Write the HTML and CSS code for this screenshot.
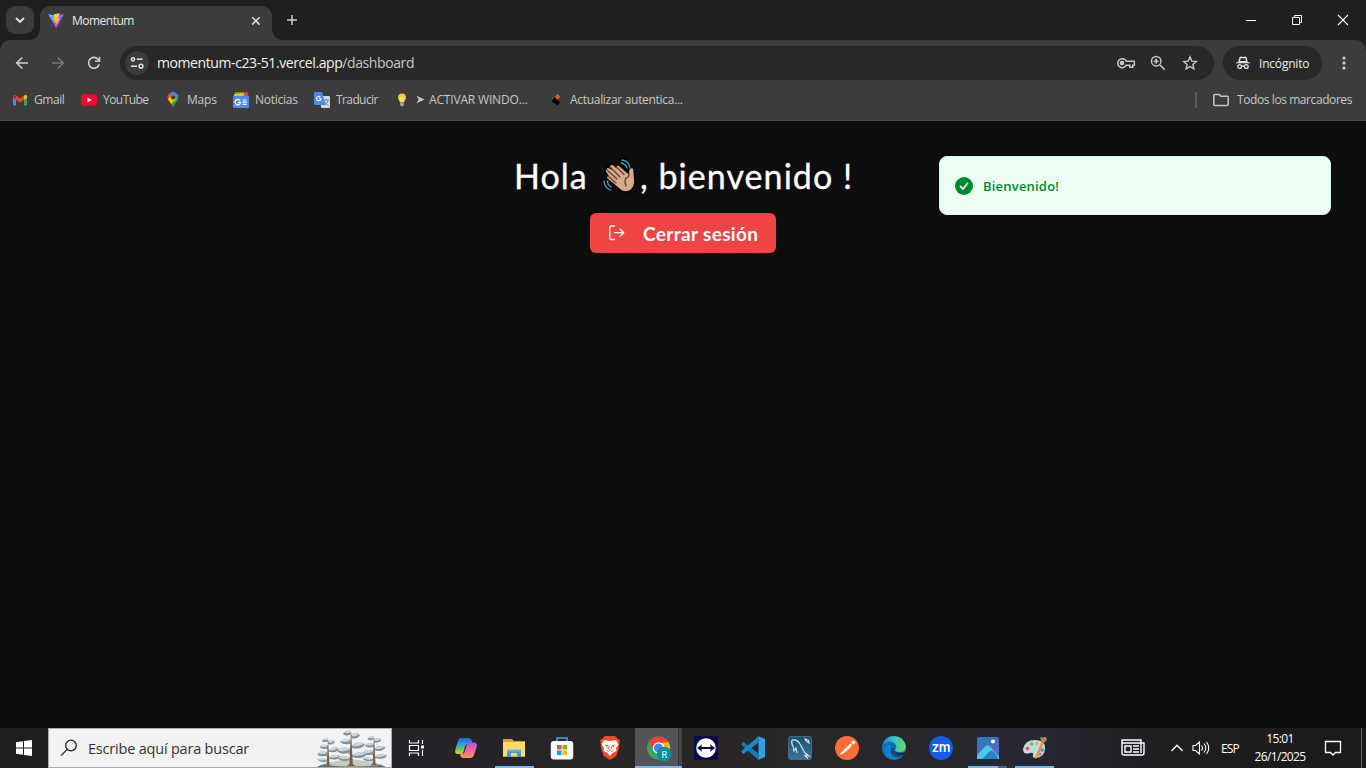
FILE: index.html
```html
<!DOCTYPE html>
<html lang="es">
<head>
<meta charset="utf-8">
<title>Momentum</title>
<link rel="stylesheet" href="styles.css">
</head>
<body>
<div class="screen">
  <header class="tabstrip">
    <div class="tab-search"><svg width="28" height="28" viewBox="0 0 28 28"><path d="M10 12l4 4 4-4" fill="none" stroke="#e6e6e6" stroke-width="1.800"/></svg></div>
    <div class="tab">
      <svg class="favicon" width="16" height="16" viewBox="0 0 16 16"><defs><linearGradient id="va" x2="1" y2="1"><stop stop-color="#41d1ff"/><stop offset=".7" stop-color="#bd34fe"/></linearGradient><linearGradient id="vb" x2="0" y2="1"><stop stop-color="#ffd943"/><stop offset="1" stop-color="#ffa800"/></linearGradient></defs><path d="M.2 1.2L8 2.5l7.8-1.3L8.2 15.4z" fill="url(#va)"/><path d="M11.8.2L6 1.2l-.6 6.400 1.800-.3-.5 2.600 1.300-.4-.5 3.800 4.400-7.800-2 .3z" fill="url(#vb)"/></svg>
      <span class="tab-title">Momentum</span>
      <svg class="tab-close" width="10" height="10" viewBox="0 0 10 10"><path d="M1.2 1.2l7.4 7.4M8.6 1.2L1.2 8.6" stroke="#e3e3e3" stroke-width="1.5"/></svg>
    </div>
    <svg class="tab-new" width="12" height="12" viewBox="0 0 12 12"><path d="M6 1v10M1 6h10" stroke="#d0d0d0" stroke-width="1.5"/></svg>
    <div class="window-buttons">
      <svg width="46" height="40" viewBox="0 0 46 40"><path d="M18 20.5h10" stroke="#fff"/></svg>
      <svg width="46" height="40" viewBox="0 0 46 40"><path d="M18.5 17.5h7v7h-7zM20.500 17.500v-2h7v7h-2" fill="none" stroke="#fff"/></svg>
      <svg width="46" height="40" viewBox="0 0 46 40"><path d="M18 15l10 10M28 15L18 25" stroke="#fff" stroke-width="1.1"/></svg>
    </div>
  </header>
  <nav class="toolbar">
    <div class="address-row">
      <svg class="nav-icon" width="16" height="16" viewBox="0 0 16 16"><path d="M14 8H3M8.300 2.500L2.700 8l5.600 5.500" fill="none" stroke="#d0d0d0" stroke-width="1.600"/></svg>
      <svg class="nav-icon" width="16" height="16" viewBox="0 0 16 16"><path d="M2 8h11M7.700 2.500L13.300 8l-5.600 5.500" fill="none" stroke="#777" stroke-width="1.600"/></svg>
      <svg class="nav-icon" width="16" height="16" viewBox="0 0 16 16"><path d="M13.200 9.200A5.400 5.400 0 1 1 12 4.200L13.700 6M13.500 2v4.300H9" fill="none" stroke="#d0d0d0" stroke-width="1.600"/></svg>
      <div class="omnibox">
        <svg class="site-info" width="24" height="24" viewBox="0 0 24 24"><circle cx="12" cy="12" r="12" fill="#3c3c3c"/><g fill="none" stroke="#e3e3e3" stroke-width="1.500"><circle cx="8" cy="8.300" r="1.600"/><path d="M11.800 8.300H17.500M6 15.200h6"/><circle cx="16" cy="15.200" r="1.900"/></g></svg>
        <span class="url"><b>momentum-c23-51.vercel.app</b>/dashboard</span>
        <svg class="key" width="20" height="20" viewBox="0 0 20 20"><g fill="none" stroke="#c7c7c7" stroke-width="1.500"><path d="M10.300 8.200h8v4h-1.500v2h-3v-2h-3.500A4.500 4.500 0 1 1 10.300 8.200z"/><circle cx="6" cy="10" r="1.600" fill="#c7c7c7"/></g></svg>
        <svg class="zoom" width="16" height="16" viewBox="0 0 16 16"><path d="M10 10l4.700 4.700M6.200 3.700v5M3.700 6.200h5" fill="none" stroke="#c7c7c7" stroke-width="1.600"/><circle cx="6.200" cy="6.200" r="4.700" fill="none" stroke="#c7c7c7" stroke-width="1.500"/></svg>
        <svg class="star" width="16" height="16" viewBox="0 0 16 16"><path d="M8 1.900l1.800 4.200 4.500.4-3.400 3 1 4.400L8 11.600l-3.900 2.300 1-4.400-3.400-3 4.500-.4z" fill="none" stroke="#c7c7c7" stroke-width="1.400"/></svg>
      </div>
      <div class="incognito"><svg width="16" height="16" viewBox="0 0 16 16"><path d="M1 7.800h14M3.700 7.300l1.200-5 1.700-.3L8 2.700 9.500 2l1.600.3 1.200 5z" fill="#e3e3e3" stroke="#e3e3e3"/><path d="M5.700 3.200h4.600L11 6H5z" fill="#282828"/><g fill="none" stroke="#e3e3e3" stroke-width="1.300"><circle cx="4.700" cy="11.500" r="1.900"/><circle cx="11.300" cy="11.500" r="1.900"/><path d="M6.500 11h3"/></g></svg><span>Incógnito</span></div>
      <svg class="more" width="4" height="16" viewBox="0 0 4 16"><g fill="#d0d0d0"><circle cx="2" cy="3" r="1.600"/><circle cx="2" cy="8" r="1.600"/><circle cx="2" cy="13" r="1.600"/></g></svg>
    </div>
    <div class="bookmarks">
      <div class="bm bm-gmail"><svg width="16" height="16" viewBox="0 0 16 16"><path d="M1 4l3 2v7.500H1z" fill="#4285f4"/><path d="M15 4l-3 2v7.500h3z" fill="#34a853"/><path d="M1 4.500Q1 1.500 4 3.500l4 3 4-3v4L8 10.500l-4-3-3-2z" fill="#ea4335"/><path d="M12 3.500q3-2 3 1v1.300l-3 2z" fill="#fbbc04"/><path d="M1 4.500Q1 3 2.500 3L4 4v3.500L1 5.500z" fill="#c5221f"/></svg><span>Gmail</span></div>
      <div class="bm bm-youtube"><svg width="16" height="16" viewBox="0 0 16 16"><rect y="2.300" width="16" height="11.400" rx="3" fill="#ff0033"/><path d="M6.300 5.500L10.700 8l-4.400 2.500z" fill="#fff"/></svg><span>YouTube</span></div>
      <div class="bm bm-maps"><svg width="16" height="16" viewBox="0 0 16 16"><defs><clipPath id="pin"><path d="M8 .2c-3.200 0-5.400 2.300-5.400 5.200 0 3.300 4 5.200 5.400 10.400 1.400-5.200 5.400-7.100 5.400-10.400C13.400 2.500 11.200.2 8 .2z"/></clipPath></defs><g clip-path="url(#pin)"><path d="M0 0h16v16H0z" fill="#34a853"/><path d="M4 0h10v4L8 7z" fill="#4285f4"/><path d="M0 0h5l3 5-5 4H0z" fill="#ea4335"/><path d="M2 8l5-5 4 4-6 6z" fill="#fbbc04"/></g><circle cx="8" cy="5.400" r="2" fill="#343434"/></svg><span>Maps</span></div>
      <div class="bm bm-news"><svg width="16" height="16" viewBox="0 0 16 16"><path d="M2 0h9l3 2v5H2z" fill="#34a853"/><path d="M8 1l7-.7.5 6H8z" fill="#ea4335"/><path d="M1 2l10-1v5H1z" fill="#fbbc04"/><rect y="4" width="16" height="12" rx="1" fill="#4c8bf5"/><path d="M7 8.500A2.700 2.700 0 1 0 7.500 10.300H5M9.500 8h4M9.500 10.200h4.500M9.500 12.400h4" fill="none" stroke="#fff" stroke-width="1.200"/></svg><span>Noticias</span></div>
      <div class="bm bm-translate"><svg width="16" height="16" viewBox="0 0 16 16"><rect x="7" y="4" width="9" height="12" rx="1" fill="#d2d9e0"/><path d="M9 8h6M12 7v1.500M14 8.500c-.8 3-2.500 4-3.500 4.800M10.500 9.500l3.500 4" stroke="#6d8292" fill="none"/><path d="M1 0h7l3.500 13H1a1 1 0 0 1-1-1V1a1 1 0 0 1 1-1z" fill="#4a88ee"/><path d="M6.300 5A2.200 2.200 0 1 0 7 6.700H5" stroke="#fff" fill="none" stroke-width="1.100"/></svg><span>Traducir</span></div>
      <div class="bm bm-bulb"><svg width="16" height="16" viewBox="0 0 16 16"><path d="M8 1.500a4 4 0 0 0-4 4c0 2 1.500 3 2 5h4c.5-2 2-3 2-5a4 4 0 0 0-4-4z" fill="#f5c83d"/><path d="M7 10V6l1-.8L9 6v4" fill="none" stroke="#fff0a0"/><path d="M6.200 10.500h3.600v3L8 14.500l-1.800-1z" fill="#9aa6ac"/></svg><span><i class="arrow"><svg width="9" height="9" viewBox="0 0 9 9"><path d="M.5.800L8.700 4.500.5 8.200 2.700 4.500z" fill="#c7c7c7"/></svg></i>ACTIVAR WINDO...</span></div>
      <div class="bm bm-auth"><svg width="16" height="16" viewBox="0 0 16 16"><path d="M9.500 2l2.700 2.700-2.700 2.700-2.700-2.700z" fill="#f25533"/><path d="M6.300 5l2.600 2.600 3.200 3-2.700 3-2.500-2.500-.6.500L3.600 9 6 6.500z" fill="#050505"/></svg><span>Actualizar autentica...</span></div>
      <div class="all-bookmarks"><svg width="16" height="16" viewBox="0 0 16 16"><path d="M.8 3.500q0-1 1-1h4.300L8 4.300h6.200q1 0 1 1v7.200q0 1-1 1H1.800q-1 0-1-1z" fill="none" stroke="#c7c7c7" stroke-width="1.500"/></svg><span>Todos los marcadores</span></div>
    </div>
  </nav>
  <main class="page">
    <section class="welcome">
      <h1><span class="hello">Hola</span><svg class="wave" width="36" height="36" viewBox="0 0 36 36"><g fill="none" stroke="#000" stroke-width="4" stroke-linecap="round"><path d="M21 2q7 1 8 8M20 5q5 1 6 5M3 23q0 7 7 9M6.500 23q0 4 4 6"/></g><path d="M5 11Q6 8 9 10L8 8q2-3 5-1l2 2q1-4 4-1l8 7 1-4q3-3 5 0l1 13q-1 9-9 10-5 0-8-4L6 21q-2-3 1-3l-2-3q-2-3 0-4z" fill="#d7a98a" stroke="#000" stroke-width="1.500"/><path d="M6 12l10 9M9 9l10 10M15 8.500l8 8M7 18l8 7M28 15.500q0 4-3 4.500-2 4 0 8" fill="none" stroke="#60432f" stroke-width="1.300" stroke-linecap="round"/><path d="M21 2q7 1 8 8M20 5q5 1 6 5M3 23q0 7 7 9M6.500 23q0 4 4 6" fill="none" stroke="#39a9ce" stroke-width="1.300" stroke-linecap="round"/></svg><span class="greeting">, bienvenido !</span></h1>
      <button class="logout"><svg width="18" height="18" viewBox="0 0 18 18"><path d="M6.500 2H2.800Q1.800 2 1.800 3v11.500q0 1 1 1h3.700M6.500 8.700H15.500M12 5L15.700 8.700 12 12.400" fill="none" stroke="#fff" stroke-width="1.300" stroke-linecap="round" stroke-linejoin="round"/></svg><span>Cerrar sesión</span></button>
    </section>
    <div class="toast"><svg width="18" height="18" viewBox="0 0 18 18"><circle cx="9" cy="9" r="9" fill="#008a2e"/><path d="M5.500 9.400l2.500 2.700L12.500 6.300" fill="none" stroke="#ecfdf3" stroke-width="1.700" stroke-linecap="round" stroke-linejoin="round"/></svg><span>Bienvenido!</span></div>
  </main>
  <footer class="taskbar">
    <div class="start"><svg width="16" height="16" viewBox="0 0 16 16"><path d="M0 2.300l7-1v6.200H0zM8 1.100L16 0v7.500H8zM0 8.500h7v6.300l-7-1zM8 8.500h8V16l-8-1.100z" fill="#fff"/></svg></div>
    <div class="search"><svg width="18" height="18" viewBox="0 0 18 18"><circle cx="11" cy="6.500" r="5.300" fill="none" stroke="#222" stroke-width="1.300"/><path d="M7.200 10.400L1 16.600" stroke="#222" stroke-width="1.300"/></svg><span>Escribe aquí para buscar</span>
      <svg class="trees" width="74" height="38" viewBox="0 0 74 38"><defs><g id="tree"><path d="M-1.600 35L0 1l1.800 34 3 2h-9z" fill="#7a5c45"/><path d="M0 28l8-3M0 25l-8-4M0 18l7-3M0 15l-6-4" stroke="#7a5c45" fill="none"/><g fill="#7d909c"><path d="M0 2q-6-1-8 3 4 3 8 0zM0 6q5-4 9 0-3 5-9 3zM0 11q-7-3-11 2 5 4 11 1zM1 17q5-6 13-2-3 6-13 4zM-1 20q-8-4-13 2 5 5 13 1zM1 26q7-5 15-1-4 6-15 3zM-1 29q-7-4-13 0 5 5 13 2z"/></g><g fill="#ccd8e0"><path d="M0 1.500q-5-1-7 2.300 4 1.200 7-.5zM1 5.500q4-3 7 0-3 2.500-7 1.500zM-1 10.500q-6-2-9 1.800 5 1.500 9-.5zM2 16.500q5-5 11-2-4 3-11 3zM-2 19.500q-7-3-11 1.800 5 2 11-.5zM2 25.500q7-4 13-1-5 3-13 2zM-2 28.500q-6-3-11 0 5 2.500 11 1z"/></g></g></defs><path d="M3 38Q14 32 37 32t35 6z" fill="#5b6f87"/><path d="M10 36q24-11 56 0-26 3-56 0z" fill="#c9cbb6"/><use href="#tree" transform="translate(14 8) scale(.78)"/><use href="#tree" transform="translate(60 6) scale(.82)"/><use href="#tree" transform="translate(37 0)"/></svg>
    </div>
    <div class="apps">
      <div class="app task-view"><svg width="18" height="18" viewBox="0 0 18 18"><path d="M1.500 1v3h9V1M1.500 17v-3h9v3M1.500 6.500h9v5h-9zM14.500 1v4M14.500 11v6" fill="none" stroke="#fff" stroke-width="1.200"/><path d="M13 6.500h3v3h-3z" fill="#fff"/></svg></div>
      <div class="app"><svg width="24" height="24" viewBox="0 0 24 24"><defs><linearGradient id="ca" x2="0" y2="1"><stop stop-color="#1765d8"/><stop offset=".4" stop-color="#2ba2dd"/><stop offset=".7" stop-color="#5dc65b"/><stop offset="1" stop-color="#efd225"/></linearGradient><linearGradient id="cb" x2="0" y2="1"><stop stop-color="#a653e7"/><stop offset=".5" stop-color="#ed67a2"/><stop offset="1" stop-color="#ff9951"/></linearGradient></defs><path d="M7 2h8q2 0 3 3l.7 2.500h-4Q12 7.500 11 11l-1.500 5Q9 18 6 18H4q-4 0-2.500-5L4 5q1-3 3-3z" fill="url(#ca)"/><path d="M17 22H9q-2 0-2.500-2L6 18q3 0 4-4l1.500-5q.7-2.500 3-2.500h5.500q4 0 2.500 5L20 19q-1 3-3 3z" fill="url(#cb)"/><path d="M14 8q-1 0-1.600 2L10.500 16q-.5 1.500-1.500 1.700L11 11q.7-3 3-3z" fill="#292435"/></svg></div>
      <div class="app open"><svg width="24" height="24" viewBox="0 0 24 24"><path d="M1 3h9l2 2h11v16H1z" fill="#dba024"/><path d="M1 6h22v14H1z" fill="#ffd86e"/><path d="M5 21v-7h14v7h-4v-4H9v4z" fill="#3e9ad6"/><path d="M5 13.500h14v2H5z" fill="#63b6e4"/></svg></div>
      <div class="app"><svg width="24" height="24" viewBox="0 0 24 24"><path d="M7 5V2h10v3" fill="none" stroke="#39a8e0" stroke-width="1.700"/><rect x=".8" y="5" width="22.400" height="18.500" rx="3" fill="#f8fafb"/><path d="M7 9h4.500v4.500H7z" fill="#f05025"/><path d="M12.500 9H17v4.500h-4.500z" fill="#7fba00"/><path d="M7 14.500h4.500V19H7z" fill="#00a4ef"/><path d="M12.500 14.500H17V19h-4.500z" fill="#ffb900"/></svg></div>
      <div class="app"><svg width="24" height="24" viewBox="0 0 24 24"><path d="M7 0h10l3 3 2 1-1 5 .3 2-3 9L12 24l-6.300-4-3-9L3 9 2 4l2-1z" fill="#f04b24"/><path d="M6 4l6 1 6-1 2.500 4.500L18 12l.5 3-4 2-2.500 3-2.500-3-4-2 .5-3-2.500-3.500z" fill="#fff"/><path d="M7 8.500l3.500 1L8.500 11zM17 8.500l-3.500 1 2 1.500zM10.500 13.500h3L12 15z" fill="#f04b24"/><path d="M11 10l-.7 3M13 10l.7 3M8.500 14l2.500 2M15.500 14L13 16" stroke="#f04b24" stroke-width=".8"/></svg></div>
      <div class="app active"><svg width="26" height="26" viewBox="0 0 26 26"><circle cx="12.500" cy="12" r="11.500" fill="#34a853"/><path d="M2.500 6.200A11.500 11.500 0 0 1 22.500 6.200L12.500 9z" fill="#ea4335"/><path d="M22.500 6.200A11.500 11.500 0 0 1 12.500 23.500L16.500 13l-4-6z" fill="#fbbc05"/><path d="M2.500 6.200L8 15l4.500-9z" fill="#ea4335"/><circle cx="12.500" cy="12" r="5.800" fill="#fff"/><circle cx="12.500" cy="12" r="4.500" fill="#4285f4"/><circle cx="18.300" cy="18.300" r="7.500" fill="#078fa0"/><text class="avatar" x="18.300" y="21.500">R</text></svg></div>
      <div class="app"><svg width="24" height="24" viewBox="0 0 24 24"><rect width="24" height="24" rx="2" fill="#080b50"/><circle cx="12" cy="12" r="9.800" fill="#fff"/><path d="M3 12l5-3.700-.6 2.700h9.200L16 8.300l5 3.700-5 3.700.6-2.700H7.400l.6 2.700z" fill="#080b50"/></svg></div>
      <div class="app narrow code"><svg width="24" height="24" viewBox="0 0 24 24"><path d="M0 8.500L2.500 6l15 11.500V24L0 8.500z" fill="#137abd"/><path d="M0 15.500L2.500 18l15-11.500V.3z" fill="#1b87ce"/><path d="M17.500.3L24 3v18l-6.500 2.700z" fill="#2ca1e6"/></svg></div>
      <div class="app narrow"><svg width="24" height="24" viewBox="0 0 24 24"><defs><linearGradient id="sql" x2="0" y2="1"><stop stop-color="#1c4e6a"/><stop offset="1" stop-color="#3b75a0"/></linearGradient></defs><rect x=".5" y=".5" width="23" height="23" rx="2" fill="url(#sql)" stroke="#416c86"/><path d="M4 4q5-1 8 4 3 6 5 9l4 3-4-.5 3 3M4 4q-1 4 1 6l1 5 2-3 1 5M17 3l1.500 2.500L21 7l-.5-2.500z" fill="none" stroke="#d9e8ee" stroke-width="1.100"/></svg></div>
      <div class="app narrow"><svg width="24" height="24" viewBox="0 0 24 24"><circle cx="12" cy="12" r="12" fill="#ff6c37"/><path d="M5 19l1-2.500 8-7.500 2 2-7 6zM14 8q2-1 3 1l-1 1.500-2-1.500zM16 6q1-2.500 3.500-1 1.500 2-1 3.500z" fill="#fff"/></svg></div>
      <div class="app narrow"><svg width="24" height="24" viewBox="0 0 24 24"><defs><linearGradient id="ea"><stop stop-color="#168bd4"/><stop offset=".5" stop-color="#34c7bd"/><stop offset="1" stop-color="#69d75b"/></linearGradient></defs><circle cx="12" cy="12" r="12" fill="#126bbb"/><path d="M.5 9Q3 0 12 0t12 10q0 6-6 6-5 0-5-2 2-2 1-5-5-7-13.500 0z" fill="url(#ea)"/><path d="M9 9q-3 10 8 12.500-6 4-12-.500Q1 15 3 11q2-3 6-2z" fill="#1680c8"/><path d="M12 12q-1 6 10 5-4 5-8 4-7-2-5-8 1-2 3-1z" fill="#164b7d"/><path d="M13 14q0 4 9.500 2.500L24 14v4l-2 1q-8 2-9-5z" fill="#292931"/></svg></div>
      <div class="app narrow"><svg width="24" height="24" viewBox="0 0 24 24"><circle cx="12" cy="12" r="12" fill="#125ce8"/><text class="zm" x="12" y="15.800">zm</text></svg></div>
      <div class="app narrow open split"><svg width="24" height="24" viewBox="0 0 24 24"><defs><linearGradient id="ph" x2="1" y2="1"><stop stop-color="#207dbd"/><stop offset="1" stop-color="#765bc0"/></linearGradient></defs><rect x="1" y="1" width="22" height="22" rx="2" fill="url(#ph)"/><path d="M1 19L10 9.500q2-1 4 1l9 10V23H1z" fill="#47c9ee"/><path d="M6 23l8-8q2-1 4 1l4 5-1 2z" fill="#2685c7"/><circle cx="17" cy="5.500" r="2" fill="#fff"/></svg></div>
      <div class="app narrow open"><svg width="24" height="24" viewBox="0 0 24 24"><path d="M0 13Q2 4 12 4q10 0 10 8 0 9-9 10-4 0-3-3 1-3-3-2-7 2-7-4z" fill="#bddbe8"/><circle cx="4.500" cy="12.500" r="1.800" fill="#df5050"/><circle cx="8.500" cy="8" r="1.800" fill="#75b84a"/><circle cx="14" cy="7.500" r="1.800" fill="#e4bf3f"/><circle cx="19" cy="14" r="1.800" fill="#4c91c5"/><circle cx="17" cy="18" r="1.600" fill="#9373bb"/><path d="M18.500 6l2 1-5.500 14-2.500 2q-1-1 0-3z" fill="#e29a32"/><path d="M17 1.500L23 1l1 3-3 3-2.500-1z" fill="#b28261"/></svg></div>
    </div>
    <div class="tray">
      <svg class="news" width="24" height="18" viewBox="0 0 24 18"><path d="M1 1h19v3h3v10q0 2-2 2H3q-2 0-2-2zM20 4v10M1 4h19M4 7h6v6H4zM12 7h6M12 10h6M12 13h6" fill="none" stroke="#fff" stroke-width="1.400"/></svg>
      <svg class="chevron" width="12" height="8" viewBox="0 0 12 8"><path d="M.5 7L6 1.300 11.500 7" fill="none" stroke="#fff" stroke-width="1.300"/></svg>
      <svg class="volume" width="18" height="16" viewBox="0 0 18 16"><path d="M1 5.500h2.500L7.500 2v12L3.500 10.500H1zM9.500 5.500q2 2.500 0 5M12 3.500q3.500 4.500 0 9M14.500 2q4.500 6 0 12" fill="none" stroke="#fff" stroke-width="1.100"/></svg>
      <span class="lang">ESP</span>
      <div class="clock"><span class="time">15:01</span><span class="date">26/1/2025</span></div>
      <svg class="notice" width="18" height="18" viewBox="0 0 18 18"><path d="M1.500 2.500h15v11h-5L9 16l-2.500-2.500h-5z" fill="none" stroke="#fff" stroke-width="1.300"/></svg>
    </div>
  </footer>
</div>
</body>
</html>
```

FILE: styles.css
```css
* { box-sizing: border-box; }
body { margin: 0; background: #0d0d0d; }
svg { display: block; flex: none; }
span { white-space: nowrap; }
.screen { width: 1366px; height: 768px; display: flex; flex-direction: column; overflow: hidden; font-family: "Open Sans", "Noto Sans", sans-serif; background: #1f1f1f; }

.tabstrip { height: 40px; display: flex; align-items: center; padding-left: 6px; background: #1f1f1f; }
.tab-search { width: 28px; height: 28px; border-radius: 9px; background: #3c3c3c; }
.tab { position: relative; width: 232px; height: 34px; margin: 6px 0 0 6px; padding: 0 11px 5px 8px; display: flex; align-items: center; border-radius: 10px 10px 0 0; background: #3c3c3c; }
.tab::before, .tab::after { content: ""; position: absolute; bottom: 0; width: 10px; height: 10px; }
.tab::before { left: -10px; background: radial-gradient(circle at 0 0, transparent 9.5px, #3c3c3c 10px); }
.tab::after { right: -10px; background: radial-gradient(circle at 100% 0, transparent 9.5px, #3c3c3c 10px); }
.tab-title { margin-left: 8px; font-size: 12px; color: #e8e8e8; letter-spacing: -.5px; }
.tab-close { margin-left: auto; }
.tab-new { margin-left: 14px; }
.window-buttons { margin-left: auto; display: flex; }

.toolbar { height: 81px; background: #3c3c3c; border-radius: 10px 10px 0 0; border-bottom: 1px solid #4c4c4c; }
.address-row { height: 46px; display: flex; align-items: center; padding-left: 14px; }
.nav-icon { margin-right: 20px; }
.omnibox { width: 1094px; height: 34px; margin-left: -2px; padding: 0 16px 0 5px; display: flex; align-items: center; border-radius: 17px; background: #282828; }
.url { margin: 0 0 1px 8px; color: #c7c7c7; font-size: 14px; letter-spacing: -.41px; }
.url b { font-weight: 400; color: #f1f1f1; }
.key { margin-left: auto; }
.zoom { margin-left: 14px; }
.star { margin-left: 16px; }
.incognito { width: 99px; height: 34px; margin-left: 9px; padding-left: 12px; display: flex; align-items: center; gap: 8px; border-radius: 17px; background: #282828; color: #eee; font-size: 12px; letter-spacing: -.2px; }
.more { margin-left: 20px; }
.bookmarks { height: 28px; display: flex; align-items: center; padding-left: 12px; color: #c7c7c7; font-size: 12px; letter-spacing: -.45px; }
.bm { display: flex; align-items: center; gap: 6px; flex: none; }
.bm span { display: flex; align-items: center; }
.bookmarks span { margin-bottom: 1px; }
.bm-gmail { width: 69px; }
.bm-youtube { width: 84px; letter-spacing: -.55px; }
.bm-maps { width: 68px; letter-spacing: -.2px; }
.bm-news { width: 81px; letter-spacing: -.25px; }
.bm-translate { width: 80px; letter-spacing: -.6px; }
.bm-bulb { width: 154px; letter-spacing: -.17px; }
.bm-auth { letter-spacing: -.3px; }
.arrow { margin-right: 4px; }
.all-bookmarks { margin-left: auto; height: 16px; padding: 0 14px 0 16px; display: flex; align-items: center; gap: 8px; border-left: 2px solid #5a5a5a; letter-spacing: -.42px; }

.page { height: 607px; background: #0d0d0d; display: grid; grid-template-columns: 1fr; }
.page > * { grid-area: 1 / 1; }
.welcome { display: flex; flex-direction: column; align-items: center; padding-top: 34px; font-family: Lato, sans-serif; }
h1 { margin: 0; height: 40px; display: flex; align-items: center; color: #fff; font-size: 34px; font-weight: 400; width: 338px; letter-spacing: 1px; -webkit-text-stroke: .3px #fff; }
h1 span { flex: none; }
.hello { width: 87px; }
.wave { margin: 2px 3px 0 0; }
.greeting { letter-spacing: 1.05px; }
.logout { width: 186px; height: 40px; margin-top: 18px; padding: 0 0 0 18px; display: flex; align-items: center; gap: 17px; border: 0; border-radius: 6px; background: #ef4444; color: #fff; font: 700 19px Lato, sans-serif; letter-spacing: .35px; }
.toast { width: 392px; height: 59px; justify-self: end; margin: 35px 35px 0 0; padding-left: 15px; display: flex; align-items: center; gap: 10px; border: 1px solid #d3fde5; border-radius: 8px; background: #ecfdf3; color: #008a2e; font-size: 13px; font-weight: 600; letter-spacing: .2px; }

.taskbar { height: 40px; display: flex; background: linear-gradient(90deg, #1d1d1e, #242329 32%, #292624 50%, #292627 57%, #27272b 65%, #272731 76%, #1e1e20 86%, #1b1b1b); }
.start { width: 48px; padding: 12px 0 0 16px; }
.search { width: 344px; display: flex; align-items: center; padding-left: 11px; border: 1px solid #aaa; background: #f2f2f2; color: #333; font-size: 14.5px; letter-spacing: -.2px; }
.search span { margin-left: 10px; }
.trees { margin: 0 3px 0 auto; }
.apps { display: flex; }
.app { width: 48px; display: grid; place-items: center; border-bottom: 3px solid transparent; padding-top: 3px; background-clip: padding-box; }
.app.task-view { width: 50px; padding-right: 1px; }
.app.narrow { width: 47px; }
.app.narrow.code { width: 46px; }
.app.open { background: linear-gradient(#76b9ed, #76b9ed) center bottom / 39px 2px no-repeat border-box; }
.app.open.split { background-image: linear-gradient(90deg, #76b9ed 76%, #44617b 76%); }
.app.active { width: 47px; margin-left: 1px; background: linear-gradient(90deg, #545457 92%, #333 92%, #333 94%, #454548 94%); border-bottom: 2px solid #76b9ed; }
.avatar { font: 9px Roboto, sans-serif; fill: #fff; text-anchor: middle; }
.zm { font: 600 13px Inter, sans-serif; fill: #fff; text-anchor: middle; letter-spacing: -.3px; }
.tray { margin-left: auto; display: flex; align-items: center; color: #fff; font-size: 12px; padding-right: 24px; background: linear-gradient(#67676c, #67676c) right 4px top / 1px 100% no-repeat; }
.chevron { margin-left: 26px; }
.volume { margin-left: 9px; }
.lang { width: 19px; margin-left: 11px; letter-spacing: -.9px; }
.clock { width: 54px; margin-left: 13px; display: flex; flex-direction: column; align-items: center; line-height: 18px; letter-spacing: -.65px; }
.notice { margin-left: 17px; }
```
